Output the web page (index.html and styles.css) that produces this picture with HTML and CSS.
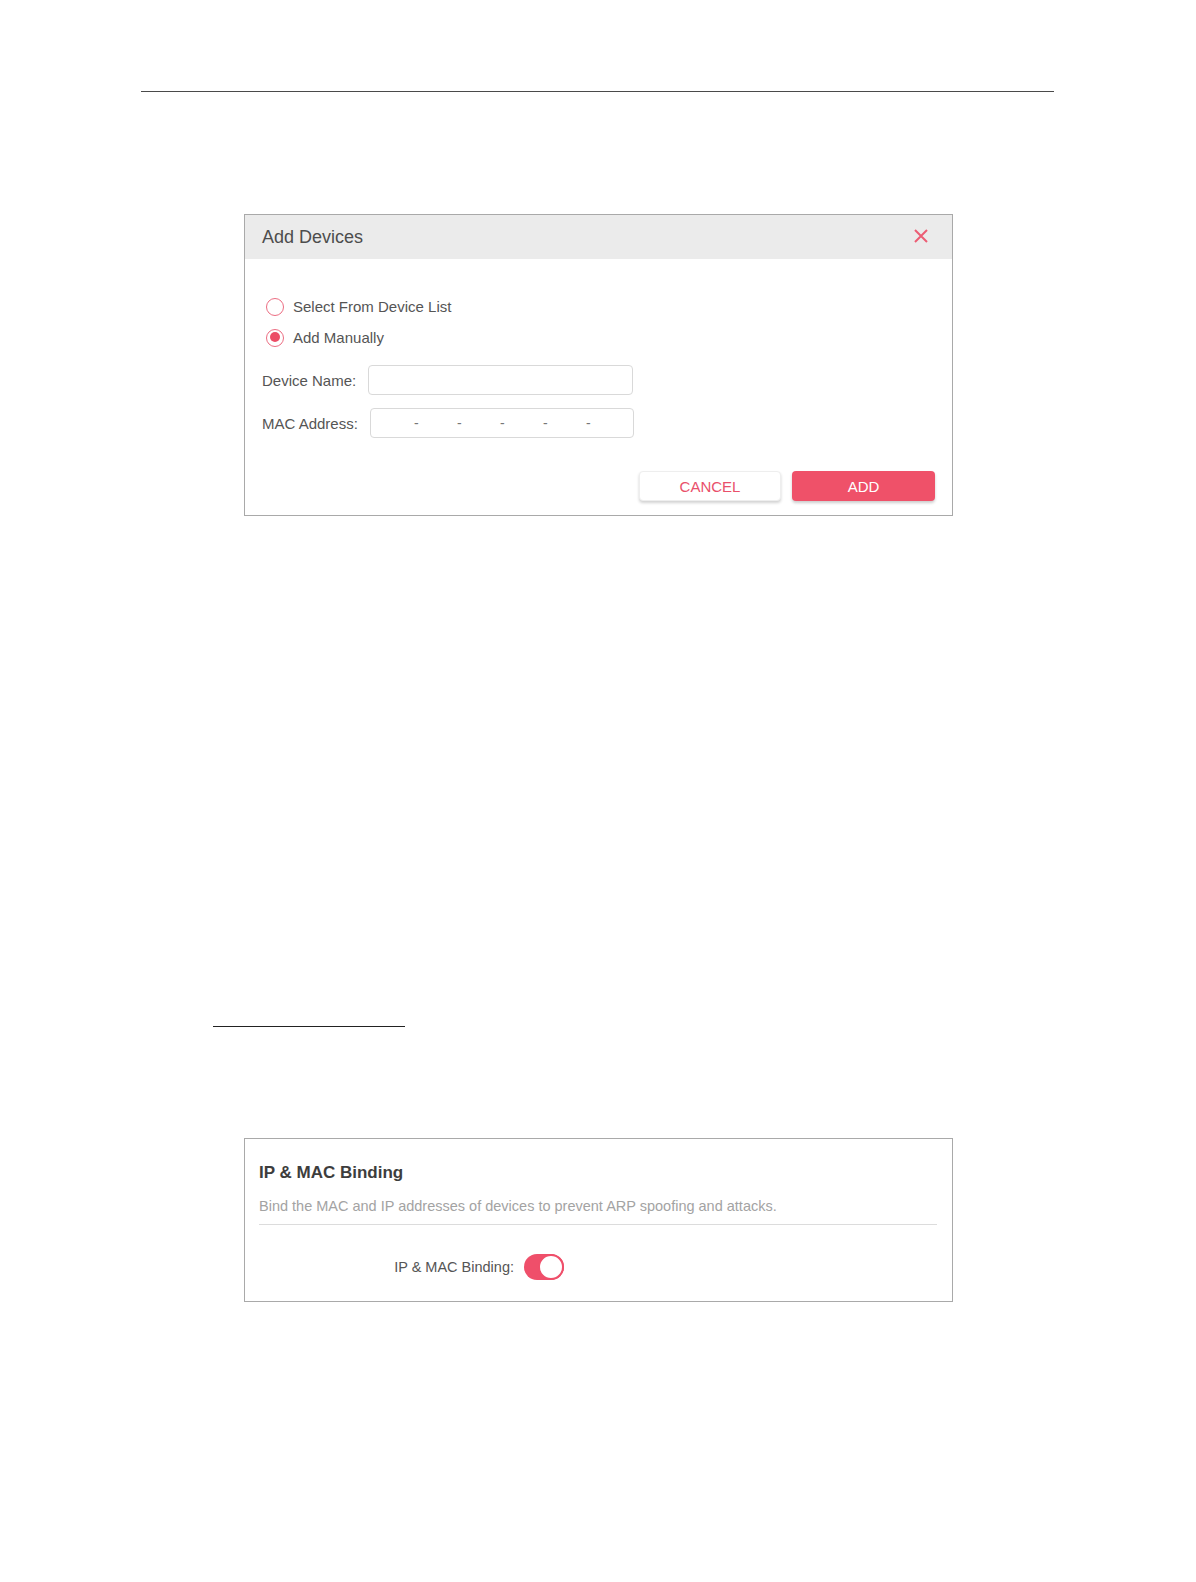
FILE: index.html
```html
<!DOCTYPE html>
<html lang="en">
<head>
<meta charset="utf-8">
<title>Add Devices / IP &amp; MAC Binding</title>
<link rel="stylesheet" href="styles.css">
</head>
<body>
<div class="page">
  <div class="top-rule"></div>

  <section class="dialog">
    <header class="dialog-head">
      <span class="dialog-title">Add Devices</span>
      <svg class="close" width="16" height="16" viewBox="0 0 16 16" aria-hidden="true">
        <path d="M2 2 L14 14 M14 2 L2 14" stroke="#ec5d74" stroke-width="2" fill="none"/>
      </svg>
    </header>
    <div class="dialog-body">
      <label class="radio-row"><span class="radio"></span><span>Select From Device List</span></label>
      <label class="radio-row"><span class="radio checked"></span><span>Add Manually</span></label>
      <div class="field-row first">
        <span class="field-label">Device Name:</span>
        <span class="input name-input"></span>
      </div>
      <div class="field-row">
        <span class="field-label">MAC Address:</span>
        <span class="input mac-input">
          <span class="dash">-</span><span class="dash">-</span><span class="dash">-</span><span class="dash">-</span><span class="dash">-</span>
        </span>
      </div>
      <div class="actions">
        <button class="btn btn-cancel">CANCEL</button>
        <button class="btn btn-add">ADD</button>
      </div>
    </div>
  </section>

  <div class="underline"></div>

  <section class="panel">
    <h2 class="panel-title">IP &amp; MAC Binding</h2>
    <p class="panel-desc">Bind the MAC and IP addresses of devices to prevent ARP spoofing and attacks.</p>
    <div class="panel-sep"></div>
    <div class="toggle-row">
      <span class="toggle-label">IP &amp; MAC Binding:</span>
      <span class="toggle"><span class="knob"></span></span>
    </div>
  </section>
</div>
</body>
</html>
```

FILE: styles.css
```css
html, body {
  margin: 0;
  padding: 0;
  background: #ffffff;
}

body {
  font-family: "Liberation Sans", Arial, sans-serif;
  color: #555555;
}

.page {
  display: flex;
  flex-direction: column;
  align-items: flex-start;
  padding-top: 91px;
  padding-bottom: 60px;
}

.top-rule {
  margin-left: 141px;
  width: 913px;
  height: 0;
  border-top: 1px solid #4a4a4a;
}

/* ---------- Add Devices dialog ---------- */
.dialog {
  margin-left: 244px;
  margin-top: 122px;
  width: 707px;
  border: 1px solid #a9a9a9;
  background: #ffffff;
}

.dialog-head {
  height: 44px;
  background: #ebebeb;
  display: flex;
  align-items: center;
  justify-content: space-between;
  padding: 0 23px 0 17px;
}

.dialog-title {
  font-size: 18px;
  color: #4d4d4d;
}

.close {
  display: block;
  margin-top: -3px;
}

.dialog-body {
  padding: 32px 17px 14px 17px;
  display: flex;
  flex-direction: column;
}

.radio-row {
  display: flex;
  align-items: center;
  height: 31px;
  padding-left: 4px;
  font-size: 15px;
  color: #555555;
  gap: 9px;
}

.radio {
  border: 1.5px solid #ec6d82;
  border-radius: 50%;
  box-sizing: border-box;
  width: 18px;
  height: 18px;
  position: relative;
}

.radio.checked::after {
  content: "";
  position: absolute;
  left: 2.5px;
  top: 2.5px;
  width: 10px;
  height: 10px;
  border-radius: 50%;
  background: #ec4d66;
}

.field-row {
  display: flex;
  align-items: center;
  margin-top: 13px;
  font-size: 15px;
  color: #555555;
}

.field-row.first {
  margin-top: 12px;
}

.field-label {
  margin-right: 12px;
}

.input {
  display: flex;
  align-items: center;
  height: 30px;
  box-sizing: border-box;
  border: 1px solid #d9d9d9;
  border-radius: 4px;
  background: #ffffff;
}

.name-input {
  width: 265px;
}

.mac-input {
  width: 264px;
  padding-left: 43px;
  gap: 36px;
}

.dash {
  color: #777777;
  font-size: 14px;
  width: 7px;
}

.actions {
  display: flex;
  justify-content: flex-end;
  gap: 11px;
  margin-top: 33px;
}

.btn {
  height: 30px;
  border-radius: 4px;
  font-family: "Liberation Sans", Arial, sans-serif;
  font-size: 15px;
  cursor: pointer;
  padding: 0;
}

.btn-cancel {
  width: 142px;
  background: #ffffff;
  color: #e9506b;
  border: 1px solid #eeeeee;
  box-shadow: 0 2px 3px rgba(0, 0, 0, 0.18);
}

.btn-add {
  width: 143px;
  background: #ef5169;
  color: #ffffff;
  border: none;
  box-shadow: 0 2px 3px rgba(0, 0, 0, 0.2);
}

/* ---------- underline ---------- */
.underline {
  margin-left: 213px;
  margin-top: 510px;
  width: 192px;
  height: 0;
  border-top: 1px solid #222222;
}

/* ---------- IP & MAC Binding panel ---------- */
.panel {
  margin-left: 244px;
  margin-top: 111px;
  border: 1px solid #a9a9a9;
  box-sizing: content-box;
  padding: 23px 15px 21px 14px;
  width: 678px;
}

.panel-title {
  margin: 0;
  font-size: 17px;
  font-weight: bold;
  color: #3d3d3d;
  line-height: 22px;
}

.panel-desc {
  margin: 13px 0 0 0;
  font-size: 14.5px;
  color: #a3a3a3;
  line-height: 18px;
}

.panel-sep {
  margin-top: 9px;
  height: 0;
  border-top: 1px solid #dcdcdc;
}

.toggle-row {
  display: flex;
  align-items: center;
  margin-top: 29px;
}

.toggle-label {
  width: 255px;
  text-align: right;
  font-size: 14.5px;
  color: #555555;
  margin-right: 10px;
}

.toggle {
  width: 40px;
  height: 26px;
  border-radius: 13px;
  background: #ef4f6a;
  position: relative;
  box-sizing: border-box;
}

.knob {
  position: absolute;
  right: 0;
  top: 0;
  width: 26px;
  height: 26px;
  border-radius: 50%;
  background: #ffffff;
  border: 2px solid #ef4f6a;
  box-sizing: border-box;
}
```
